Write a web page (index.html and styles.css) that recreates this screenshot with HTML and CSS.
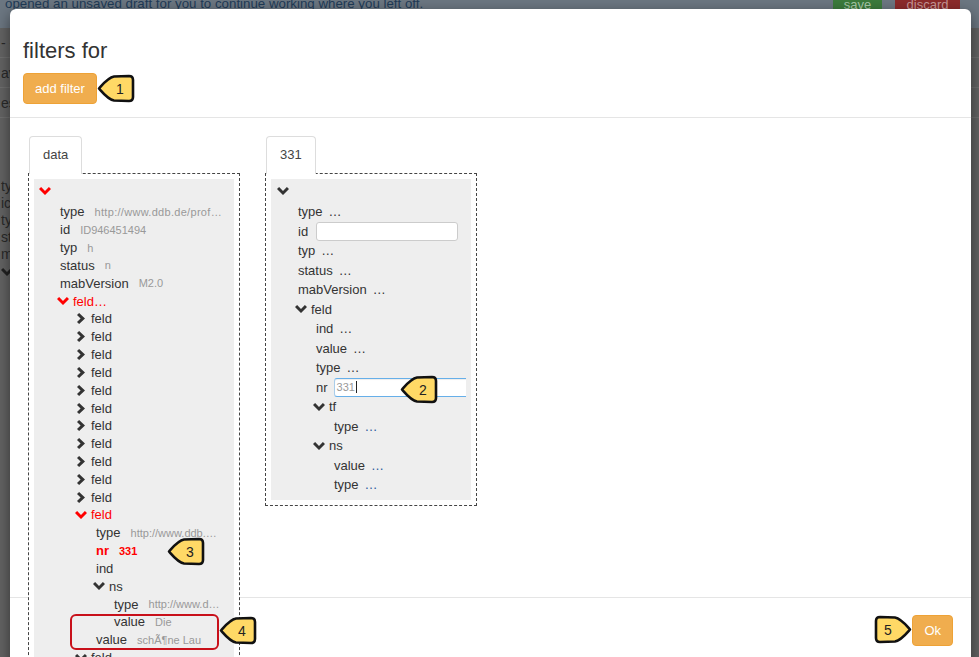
FILE: index.html
```html
<!DOCTYPE html>
<html>
<head>
<meta charset="utf-8">
<link rel="stylesheet" href="styles.css">
</head>
<body>
<div class="page">
  <div class="topbar">
    <div class="msg">opened an unsaved draft for you to continue working where you left off.</div>
    <div class="actions">
      <div class="bgbtn save">save</div>
      <div class="bgbtn discard">discard</div>
    </div>
  </div>
  <div class="bgrow">- -</div>
  <div class="bgrow">av</div>
  <div class="bgrow">es</div>
  <div class="bgtree">
    <div>ty</div><div>ic</div><div>ty</div><div>st</div><div>m</div>
    <div><svg class="ic" viewBox="0 0 12 8" width="12" height="8"><path d="M0 2.1L2.1 0 6 3.9 9.9 0 12 2.1 6 8z"/></svg></div>
  </div>
</div>

<div class="modal">
  <div class="modal-header">
    <h4 class="title">filters for</h4>
    <button class="btn">add filter</button>
  </div>
  <div class="modal-body">
    <div class="tabset">
      <div class="tab">data</div>
      <div class="box">
        <div class="panel pl">
          <div class="row root"><span class="chev red"><svg viewBox="0 0 12 8" width="12" height="8"><path d="M0 2.1L2.1 0 6 3.9 9.9 0 12 2.1 6 8z"/></svg></span></div>
          <div class="row l1"><span class="k">type</span><span class="v wide">http://www.ddb.de/prof…</span></div>
          <div class="row l1"><span class="k">id</span><span class="v">ID946451494</span></div>
          <div class="row l1"><span class="k">typ</span><span class="v">h</span></div>
          <div class="row l1"><span class="k">status</span><span class="v">n</span></div>
          <div class="row l1"><span class="k">mabVersion</span><span class="v">M2.0</span></div>
          <div class="row l1"><span class="chev red"><svg viewBox="0 0 12 8" width="12" height="8"><path d="M0 2.1L2.1 0 6 3.9 9.9 0 12 2.1 6 8z"/></svg></span><span class="k red">feld…</span></div>
          <div class="row l2"><span class="chev"><svg viewBox="0 0 9 11" width="9" height="11"><path d="M2.1 0L8 5.5 2.1 11 0 8.9 3.6 5.5 0 2.1z"/></svg></span><span class="k">feld</span></div>
          <div class="row l2"><span class="chev"><svg viewBox="0 0 9 11" width="9" height="11"><path d="M2.1 0L8 5.5 2.1 11 0 8.9 3.6 5.5 0 2.1z"/></svg></span><span class="k">feld</span></div>
          <div class="row l2"><span class="chev"><svg viewBox="0 0 9 11" width="9" height="11"><path d="M2.1 0L8 5.5 2.1 11 0 8.9 3.6 5.5 0 2.1z"/></svg></span><span class="k">feld</span></div>
          <div class="row l2"><span class="chev"><svg viewBox="0 0 9 11" width="9" height="11"><path d="M2.1 0L8 5.5 2.1 11 0 8.9 3.6 5.5 0 2.1z"/></svg></span><span class="k">feld</span></div>
          <div class="row l2"><span class="chev"><svg viewBox="0 0 9 11" width="9" height="11"><path d="M2.1 0L8 5.5 2.1 11 0 8.9 3.6 5.5 0 2.1z"/></svg></span><span class="k">feld</span></div>
          <div class="row l2"><span class="chev"><svg viewBox="0 0 9 11" width="9" height="11"><path d="M2.1 0L8 5.5 2.1 11 0 8.9 3.6 5.5 0 2.1z"/></svg></span><span class="k">feld</span></div>
          <div class="row l2"><span class="chev"><svg viewBox="0 0 9 11" width="9" height="11"><path d="M2.1 0L8 5.5 2.1 11 0 8.9 3.6 5.5 0 2.1z"/></svg></span><span class="k">feld</span></div>
          <div class="row l2"><span class="chev"><svg viewBox="0 0 9 11" width="9" height="11"><path d="M2.1 0L8 5.5 2.1 11 0 8.9 3.6 5.5 0 2.1z"/></svg></span><span class="k">feld</span></div>
          <div class="row l2"><span class="chev"><svg viewBox="0 0 9 11" width="9" height="11"><path d="M2.1 0L8 5.5 2.1 11 0 8.9 3.6 5.5 0 2.1z"/></svg></span><span class="k">feld</span></div>
          <div class="row l2"><span class="chev"><svg viewBox="0 0 9 11" width="9" height="11"><path d="M2.1 0L8 5.5 2.1 11 0 8.9 3.6 5.5 0 2.1z"/></svg></span><span class="k">feld</span></div>
          <div class="row l2"><span class="chev"><svg viewBox="0 0 9 11" width="9" height="11"><path d="M2.1 0L8 5.5 2.1 11 0 8.9 3.6 5.5 0 2.1z"/></svg></span><span class="k">feld</span></div>
          <div class="row l2"><span class="chev red"><svg viewBox="0 0 12 8" width="12" height="8"><path d="M0 2.1L2.1 0 6 3.9 9.9 0 12 2.1 6 8z"/></svg></span><span class="k red">feld</span></div>
          <div class="row l3"><span class="k">type</span><span class="v">http://www.ddb.…</span></div>
          <div class="row l3"><span class="k red b">nr</span><span class="v red b">331</span></div>
          <div class="row l3"><span class="k">ind</span></div>
          <div class="row l3"><span class="chev"><svg viewBox="0 0 12 8" width="12" height="8"><path d="M0 2.1L2.1 0 6 3.9 9.9 0 12 2.1 6 8z"/></svg></span><span class="k">ns</span></div>
          <div class="row l4"><span class="k">type</span><span class="v">http://www.d…</span></div>
          <div class="row l4"><span class="k">value</span><span class="v">Die</span></div>
          <div class="row l3"><span class="k">value</span><span class="v">schÃ¶ne Lau</span></div>
          <div class="row l2"><span class="chev"><svg viewBox="0 0 12 8" width="12" height="8"><path d="M0 2.1L2.1 0 6 3.9 9.9 0 12 2.1 6 8z"/></svg></span><span class="k">feld</span></div>
          <div class="row l2"><span class="chev"><svg viewBox="0 0 9 11" width="9" height="11"><path d="M2.1 0L8 5.5 2.1 11 0 8.9 3.6 5.5 0 2.1z"/></svg></span><span class="k">feld</span></div>
        </div>
      </div>
    </div>

    <div class="tabset">
      <div class="tab">331</div>
      <div class="box">
        <div class="panel pr">
          <div class="row root"><span class="chev"><svg viewBox="0 0 12 8" width="12" height="8"><path d="M0 2.1L2.1 0 6 3.9 9.9 0 12 2.1 6 8z"/></svg></span></div>
          <div class="row l1"><span class="k">type</span><span class="dots">…</span></div>
          <div class="row l1"><span class="k">id</span><span class="inp"></span></div>
          <div class="row l1"><span class="k">typ</span><span class="dots">…</span></div>
          <div class="row l1"><span class="k">status</span><span class="dots">…</span></div>
          <div class="row l1"><span class="k">mabVersion</span><span class="dots">…</span></div>
          <div class="row l1"><span class="chev"><svg viewBox="0 0 12 8" width="12" height="8"><path d="M0 2.1L2.1 0 6 3.9 9.9 0 12 2.1 6 8z"/></svg></span><span class="k">feld</span></div>
          <div class="row l2"><span class="k">ind</span><span class="dots">…</span></div>
          <div class="row l2"><span class="k">value</span><span class="dots">…</span></div>
          <div class="row l2"><span class="k">type</span><span class="dots">…</span></div>
          <div class="row l2"><span class="k">nr</span><span class="inp focus">331<span class="caret"></span></span></div>
          <div class="row l2"><span class="chev"><svg viewBox="0 0 12 8" width="12" height="8"><path d="M0 2.1L2.1 0 6 3.9 9.9 0 12 2.1 6 8z"/></svg></span><span class="k">tf</span></div>
          <div class="row l3"><span class="k">type</span><span class="dots blue">…</span></div>
          <div class="row l2"><span class="chev"><svg viewBox="0 0 12 8" width="12" height="8"><path d="M0 2.1L2.1 0 6 3.9 9.9 0 12 2.1 6 8z"/></svg></span><span class="k">ns</span></div>
          <div class="row l3"><span class="k">value</span><span class="dots blue">…</span></div>
          <div class="row l3"><span class="k">type</span><span class="dots blue">…</span></div>
        </div>
      </div>
    </div>
  </div>
  <div class="modal-footer">
    <button class="btn">Ok</button>
  </div>
</div>

<div class="mark"></div>

<div class="callout c1"><svg width="38" height="29" viewBox="0 0 38 29"><path d="M2 14.5C6 10 11 3.5 17 2.5L32 2Q36 2 36 6L36 23Q36 27 32 27L17 26.5C11 25.5 6 19 2 14.5Z"/><text x="23" y="19.5">1</text></svg></div>
<div class="callout c2"><svg width="38" height="29" viewBox="0 0 38 29"><path d="M2 14.5C6 10 11 3.5 17 2.5L32 2Q36 2 36 6L36 23Q36 27 32 27L17 26.5C11 25.5 6 19 2 14.5Z"/><text x="23" y="19.5">2</text></svg></div>
<div class="callout c3"><svg width="38" height="29" viewBox="0 0 38 29"><path d="M2 14.5C6 10 11 3.5 17 2.5L32 2Q36 2 36 6L36 23Q36 27 32 27L17 26.5C11 25.5 6 19 2 14.5Z"/><text x="23" y="19.5">3</text></svg></div>
<div class="callout c4"><svg width="38" height="29" viewBox="0 0 38 29"><path d="M2 14.5C6 10 11 3.5 17 2.5L32 2Q36 2 36 6L36 23Q36 27 32 27L17 26.5C11 25.5 6 19 2 14.5Z"/><text x="23" y="19.5">4</text></svg></div>
<div class="callout c5"><svg width="38" height="29" viewBox="0 0 38 29"><path d="M36 14.5C32 10 27 3.5 21 2.5L6 2Q2 2 2 6L2 23Q2 27 6 27L21 26.5C27 25.5 32 19 36 14.5Z"/><text x="14" y="19.5">5</text></svg></div>
</body>
</html>
```

FILE: styles.css
```css
* { box-sizing: border-box; }
html, body { margin: 0; padding: 0; }
body {
  width: 979px;
  height: 657px;
  overflow: hidden;
  position: relative;
  background: #646464;
  font-family: "Liberation Sans", Arial, sans-serif;
  color: #333;
}

/* background page (under the backdrop) */
.topbar {
  height: 28px;
  background: #6c7782;
  display: flex;
  align-items: flex-start;
  padding-left: 5px;
  overflow: hidden;
}
.msg {
  font-size: 13.3px;
  line-height: 16px;
  margin-top: -4px;
  color: #1f3b57;
  white-space: nowrap;
}
.actions {
  margin-left: auto;
  margin-right: 19px;
  display: flex;
  gap: 13px;
}
.bgbtn {
  height: 28px;
  font-size: 13px;
  line-height: 16px;
  text-align: center;
  margin-top: -7px;
  padding-top: 4px;
  overflow: hidden;
}
.bgbtn.save { width: 49px; background: #3c7b3c; color: #a8c8a8; }
.bgbtn.discard { width: 65px; background: #8c2b2b; color: #c89898; }
.bgrow {
  height: 30px;
  line-height: 30px;
  font-size: 14px;
  color: #2a2a2a;
  padding-left: 1px;
  border-bottom: 1px solid #707070;
}
.bgtree {
  margin-top: 60px;
  padding-left: 1px;
  font-size: 14px;
  line-height: 17px;
  color: #2a2a2a;
}
.bgtree .ic { fill: #222; }

/* modal */
.modal {
  position: absolute;
  left: 10px;
  top: 9px;
  width: 961px;
  height: 720px;
  background: #fff;
  border-radius: 6px;
  box-shadow: 0 5px 15px rgba(0,0,0,0.5);
}
.modal-header {
  padding: 30px 13px 13px;
  border-bottom: 1px solid #e5e5e5;
}
.title {
  margin: 0 0 10px;
  font-size: 22px;
  line-height: 24px;
  font-weight: normal;
  color: #333;
}
.btn {
  display: inline-block;
  font-family: "Liberation Sans", Arial, sans-serif;
  font-size: 13px;
  line-height: 19px;
  padding: 5px 11px;
  color: #fff;
  background: #f0ad4e;
  border: 1px solid #eea236;
  border-radius: 4px;
}
.modal-body {
  height: 479px;
  padding: 18px 18px 0;
  display: flex;
  align-items: flex-start;
  gap: 25px;
}
.tabset { width: 212px; }
.tab {
  display: inline-block;
  position: relative;
  z-index: 2;
  margin-left: 1px;
  margin-bottom: -1px;
  padding: 9px 13px 10px;
  font-size: 13px;
  line-height: 18px;
  color: #444;
  background: #fff;
  border: 1px solid #ddd;
  border-bottom: none;
  border-radius: 4px 4px 0 0;
}
.box {
  position: relative;
  z-index: 1;
  background: #fff;
  border: 1px dashed #444;
  padding: 5px;
}
.panel {
  width: 200px;
  background: #eee;
  overflow: hidden;
}
.pl { padding: 0 6px 0 0; }
.pr { padding: 0 5px 5px 1px; }

.row {
  white-space: nowrap;
  overflow: hidden;
  font-size: 13px;
  display: flex;
  align-items: center;
}
.pl .row { height: 17.83px; }
.pr .row { height: 19.5px; }
.pl .row.root { height: 24px; }
.pr .row.root { height: 23px; }
.root { padding-left: 8px; }
.l1 { padding-left: 26px; }
.l2 { padding-left: 44px; }
.l3 { padding-left: 62px; }
.l4 { padding-left: 80px; }

.chev {
  display: inline-flex;
  justify-content: center;
  align-items: center;
  width: 12px;
  margin-left: -3px;
  margin-right: 4px;
  color: #333;
  flex: none;
}
.chev svg { fill: currentColor; display: block; }
.chev.red { color: #f00; }
.k { color: #333; }
.k.red { color: #f00; }
.b { font-weight: bold; }
.v {
  font-size: 11px;
  color: #999;
  margin-left: 10px;
}
.v.wide { letter-spacing: 0.3px; }
.v.red { color: #f00; }
.dots { margin-left: 6px; color: #333; }
.dots.blue { color: #2d5c9c; }

.inp {
  display: inline-block;
  flex: none;
  width: 142px;
  height: 19px;
  margin-left: 8px;
  background: #fff;
  border: 1px solid #ccc;
  border-radius: 3px;
  font-size: 11px;
  line-height: 17px;
  color: #999;
  padding-left: 2px;
}
.inp.focus {
  margin-left: 6px;
  width: 150px;
  border-color: #66afe9;
  border-left-color: #a9cdea;
  box-shadow: inset 0 1px 1px rgba(0,0,0,0.075);
}
.caret {
  display: inline-block;
  width: 1px;
  height: 12px;
  background: #222;
  vertical-align: -2px;
  margin-left: 1px;
}

.modal-footer {
  border-top: 1px solid #e5e5e5;
  padding: 17px 18px;
  text-align: right;
}

/* annotations */
.mark {
  position: absolute;
  left: 70px;
  top: 614px;
  width: 149px;
  height: 36px;
  border: 2px solid #c8101a;
  border-radius: 6px;
  z-index: 5;
}
.callout {
  position: absolute;
  width: 38px;
  height: 29px;
  z-index: 6;
}
.callout svg { display: block; }
.callout path {
  fill: #ffd966;
  stroke: #111;
  stroke-width: 2.6;
  stroke-linejoin: round;
}
.callout text {
  font-family: "Liberation Sans", Arial, sans-serif;
  font-size: 14px;
  fill: #222;
  text-anchor: middle;
}
.c1 { left: 97px; top: 74px; }
.c2 { left: 400px; top: 375px; }
.c3 { left: 167px; top: 537px; }
.c4 { left: 219px; top: 616px; }
.c5 { left: 874px; top: 615px; }
```
